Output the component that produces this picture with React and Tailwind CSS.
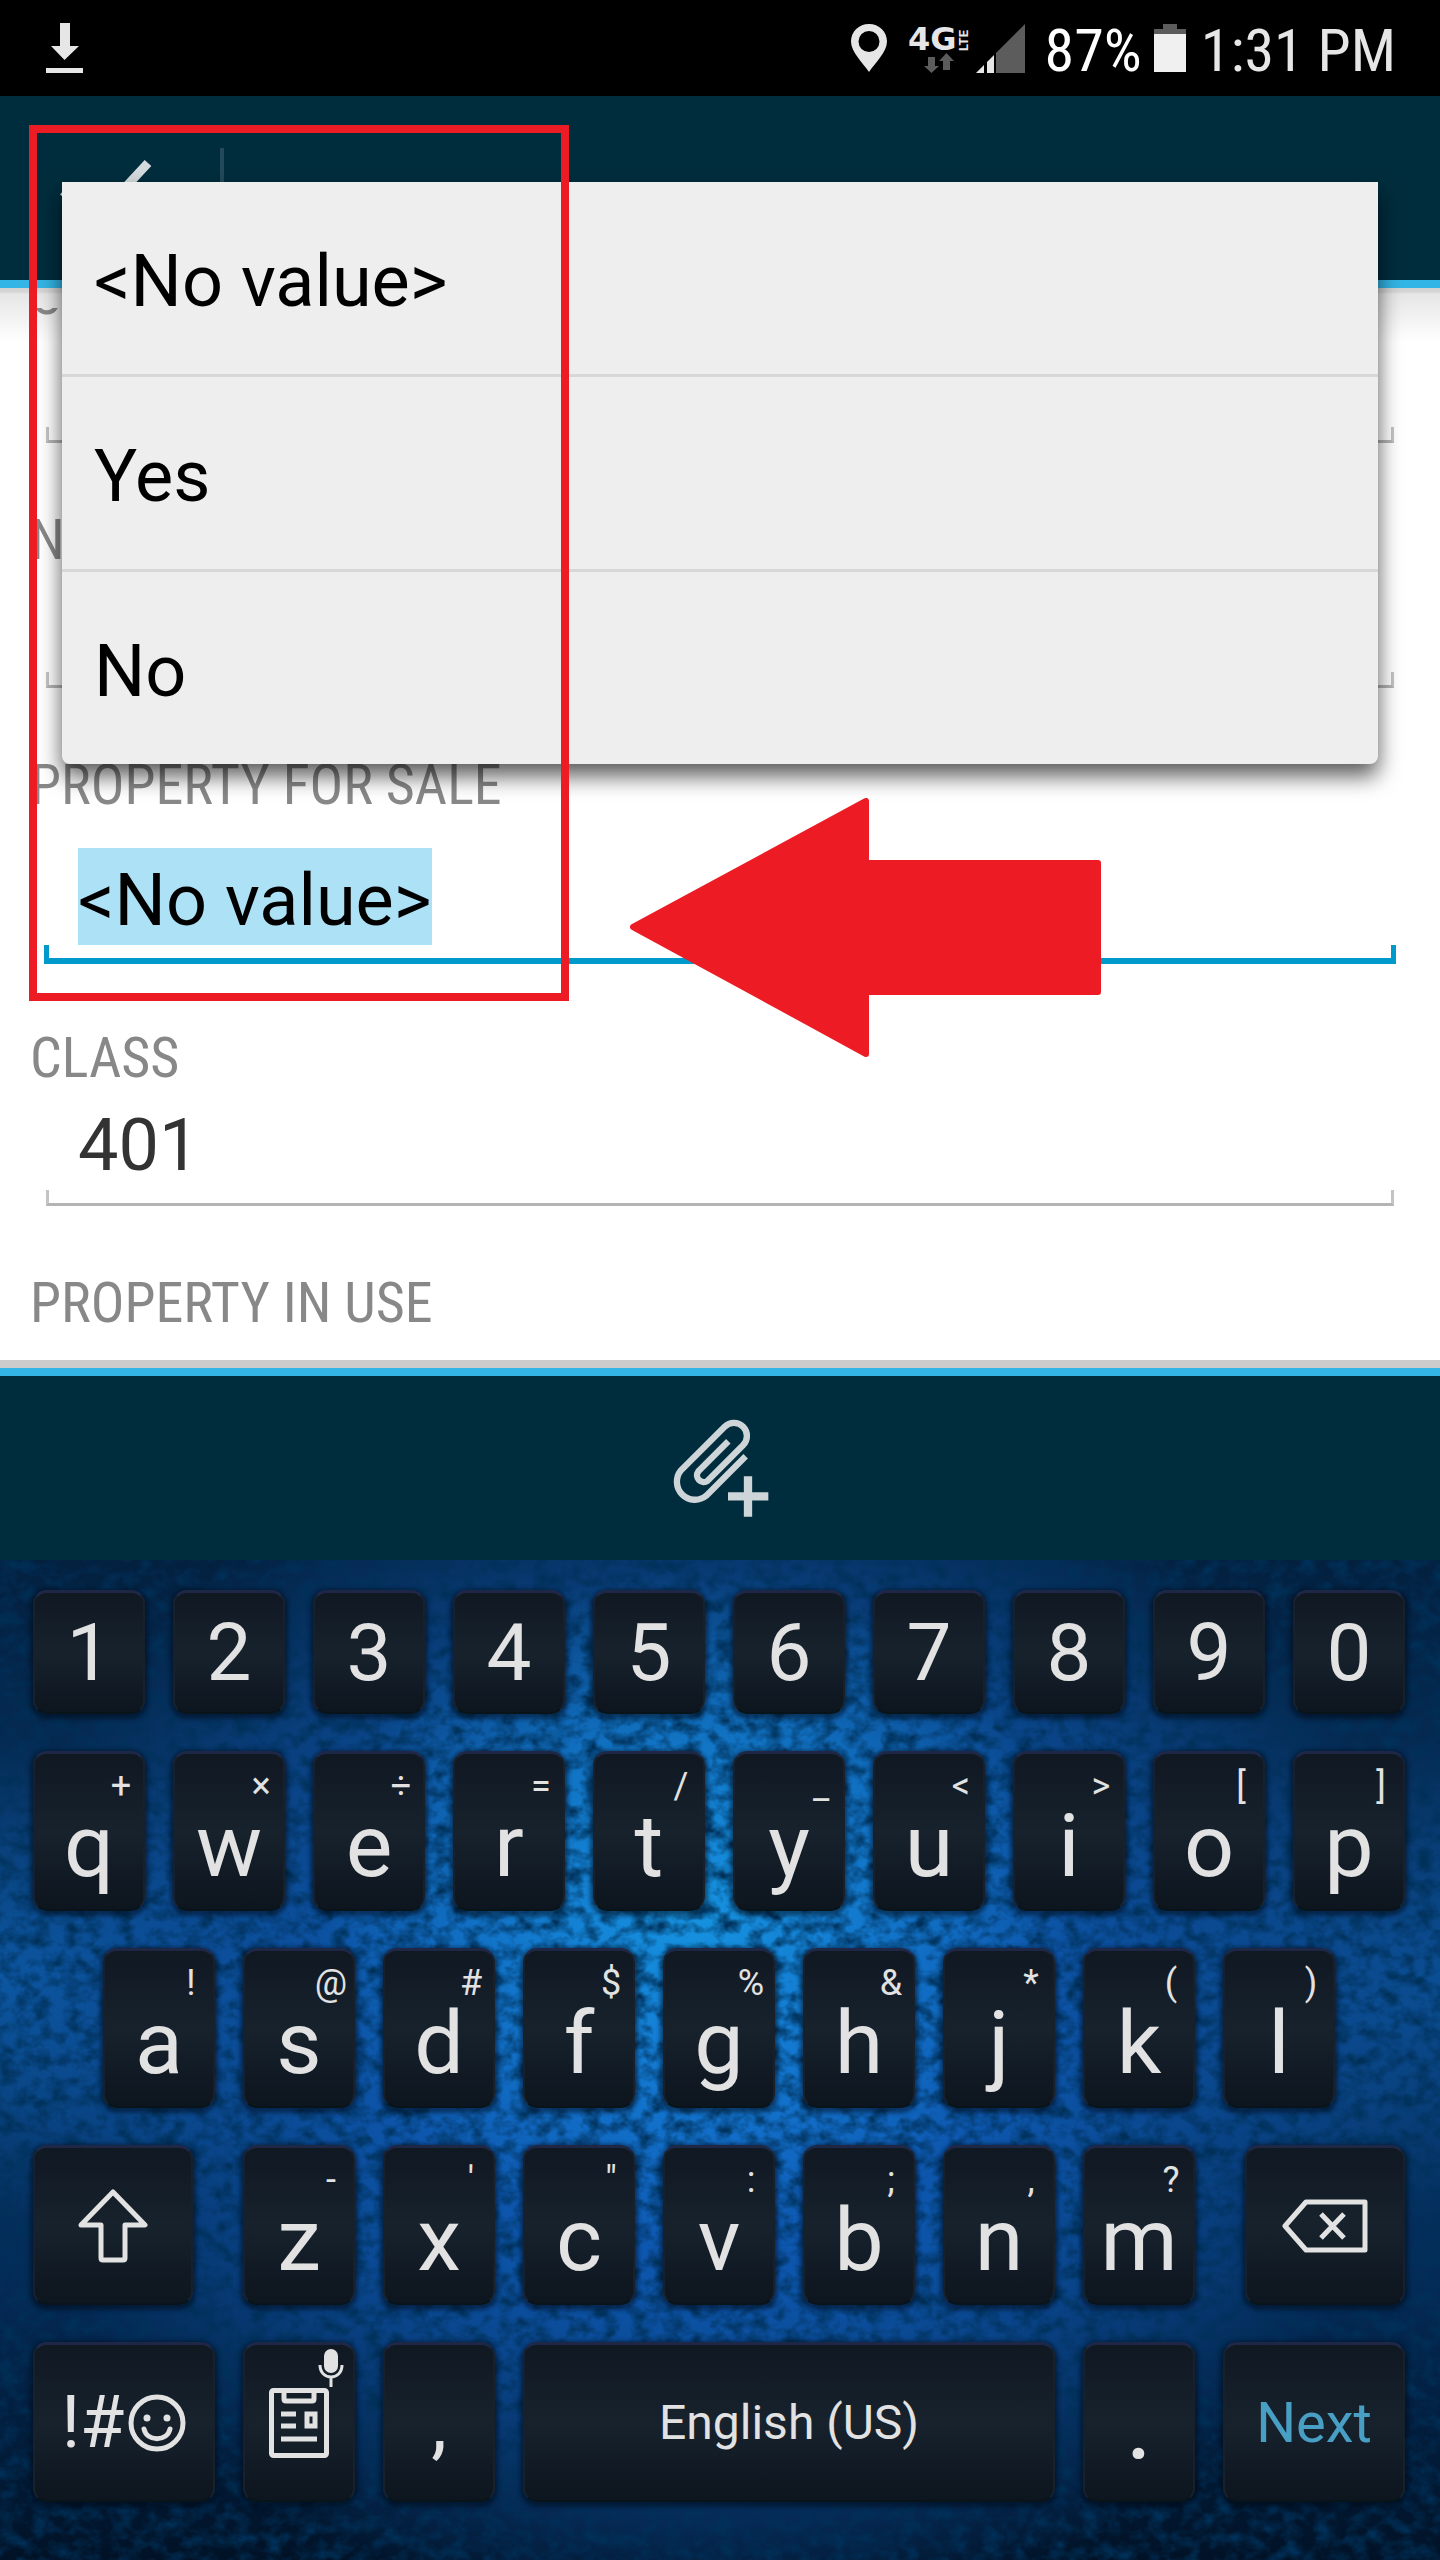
import React from "react";

const CONDENSED = "font-['Roboto_Condensed','Liberation_Sans_Narrow',Roboto,sans-serif]";

function StatusBar() {
  return (
    <header className="flex h-24 items-center justify-between bg-black pl-[46px] pr-[44px] text-[#e6e6e6]">
      <svg width="37" height="50" viewBox="0 0 37 50" fill="#e6e6e6" role="img" aria-label="Download">
        <path d="M14 0h10v23h9L18.500 37 5 23h9zM0 45h37v5H0z" />
      </svg>
      <div className="flex items-center">
        <svg width="40" height="48" viewBox="0 0 40 48" role="img" aria-label="Location">
          <path fillRule="evenodd" fill="#e6e6e6" d="M18 0C8 0 0 7.500 0 17.500 0 28 12 39 18 48c6-9 18-20 18-30.500C36 7.500 28 0 18 0zm0 7a10.500 10.500 0 1 1 0 21 10.500 10.500 0 0 1 0-21z" />
        </svg>
        <svg className="ml-[18px] overflow-visible" width="60" height="48" viewBox="0 0 60 48" role="img" aria-label="4G LTE">
          <text x="-1" y="26" fontSize="32" fontWeight="700" fontFamily="DejaVu Sans, sans-serif" fill="#e6e6e6">4G</text>
          <text transform="translate(59 27) rotate(-90)" fontSize="13" fontWeight="700" fontFamily="Roboto, sans-serif" fill="#e6e6e6">LTE</text>
          <path fill="#5c5c5c" d="M19 33h7v9h4l-7.500 7L15 42h4zM34 46v-9h-4l7.500-8 7.500 8h-4v9z" />
        </svg>
        <svg className="ml-[7px]" width="49" height="49" viewBox="0 0 49 49" role="img" aria-label="Signal">
          <path fill="#5c5c5c" d="M20 29 49 0v49H20z" />
          <path fill="#e6e6e6" d="M0 49 8 41v8zM11 38l7-7v18h-7z" />
        </svg>
        <span className={`ml-[20px] pt-1.5 text-[60px] leading-[72px] text-white ${CONDENSED}`}>87%</span>
        <svg className="ml-[12px]" width="32" height="48" viewBox="0 0 32 48" role="img" aria-label="Battery">
          <path fill="#5c5c5c" d="M9 0h14v5h9v6H0V5h9z" />
          <path fill="#f0f0f0" d="M0 10h32v38H0z" />
        </svg>
        <span className={`ml-[15px] pt-1.5 text-[60px] leading-[72px] ${CONDENSED}`}>1:31 PM</span>
      </div>
    </header>
  );
}

function ActionBar() {
  return (
    <nav className="flex h-48 items-center border-b-8 border-[#33b5e5] bg-[#002d3d]">
      <button type="button" aria-label="Done" className="flex h-20 w-[224px] items-center border-r-4 border-[#23495a] pl-[58px]">
        <svg width="96" height="76" viewBox="0 0 96 76" fill="none" stroke="#d3dbde" strokeWidth="9">
          <path d="M90 13 38 69 5 41" />
        </svg>
      </button>
    </nav>
  );
}

function Field({ id, label, value, active }) {
  return (
    <div className={active ? "mb-[62px]" : "mb-[65px]"}>
      <label htmlFor={id} className={`block pl-[30px] text-[56px] leading-[64px] text-[#888888] ${CONDENSED}`}>
        {label}
      </label>
      {active ? (
        <div className="mx-11 pt-[31px]">
          <input id={id} defaultValue={value} className="ml-[34px] block h-[97px] w-[354px] bg-[#ade1f6] pt-2 text-[72px] text-black outline-none" />
          <div className="h-[19px] border-x-[5px] border-b-[6px] border-[#0099cc]" />
        </div>
      ) : (
        <div className="mx-[46px]">
          <input id={id} defaultValue={value} className="block h-[100px] w-full bg-transparent pl-8 pt-3 text-[72px] text-[#333333] outline-none" />
          <div className="h-4 border-x-[3px] border-b-[3px] border-[#c4c4c4] border-b-[#b4b4b4]" />
        </div>
      )}
    </div>
  );
}

function Form() {
  return (
    <main className="border-b-8 border-[#cccccc] bg-[linear-gradient(to_bottom,#d2d2d2_0px,#d6d6d6_4px,#e6e6e6_6px,#ffffff_54px)] pt-5">
      <div className="overflow-hidden">
        <div className="-mt-[45px] pb-[25px]">
          <Field id="city" label="CITY" value="" />
          <Field id="name" label="NAME" value="" />
          <Field id="sale" label="PROPERTY FOR SALE" value="<No value>" active />
          <Field id="class" label="CLASS" value="401" />
          <h2 className={`pl-[30px] text-[56px] leading-[64px] text-[#888888] ${CONDENSED}`}>PROPERTY IN USE</h2>
        </div>
      </div>
    </main>
  );
}

function Dropdown() {
  const options = ["<No value>", "Yes", "No"];
  return (
    <ul
      role="listbox"
      aria-label="Property for sale"
      className="absolute left-[62px] right-[62px] top-[182px] divide-y-[3px] divide-[#d7d7d7] rounded-b-lg bg-[#eeeeee] shadow-[0_12px_22px_0_rgba(0,0,0,0.65)]"
    >
      {options.map((o) => (
        <li key={o} role="option" aria-selected={o === "<No value>"}>
          <button type="button" className="block h-48 w-full pl-8 pt-2 text-left text-[72px] text-black">
            {o}
          </button>
        </li>
      ))}
    </ul>
  );
}

function Annotations() {
  return (
    <>
      <div className="pointer-events-none absolute left-[29px] top-[125px] h-[876px] w-[540px] border-8 border-[#ed1c24]" />
      <svg className="pointer-events-none absolute left-[630px] top-[798px]" width="472" height="260" viewBox="0 0 472 260" aria-hidden="true">
        <path d="M3 129 236 3v62h232v129H236v62z" fill="#ed1c24" stroke="#ed1c24" strokeWidth="6" strokeLinejoin="round" />
      </svg>
    </>
  );
}

function AttachBar() {
  return (
    <div className="flex h-48 items-center justify-center border-t-8 border-[#33b5e5] bg-[#002d3d]">
      <button type="button" aria-label="Add attachment">
        <svg width="100" height="104" viewBox="330 215 300 312" fill="none">
          <path d="M557 336 439 454A54 54 0 0 1 363 378L494 247A39 39 0 0 1 549 303L443 409A20 20 0 0 1 415 381L505 291" stroke="#cdd5d8" strokeWidth="19" />
          <path d="M564 396v121M504 456h121" stroke="#cdd5d8" strokeWidth="25" />
        </svg>
      </button>
    </div>
  );
}

function Key({ children, hint, label, className = "" }) {
  return (
    <button
      type="button"
      aria-label={label}
      className={`relative flex items-center justify-center rounded-[14px] border-2 border-t-[3px] border-[#18202b] border-t-[#1e2745] border-b-[#08141a] bg-linear-to-b from-[#101822] via-[#17222d] to-[#0d151e] text-[#e2e2e2] shadow-[0_2px_4px_3px_rgba(0,8,20,0.5)] ${className}`}
    >
      {hint && <span className="absolute right-[-2px] top-2 w-12 text-center text-[36px] leading-[48px]">{hint}</span>}
      {children}
    </button>
  );
}

const ROW1 = "1234567890".split("");
const ROW2 = [["q", "+"], ["w", "×"], ["e", "÷"], ["r", "="], ["t", "/"], ["y", "_"], ["u", "<"], ["i", ">"], ["o", "["], ["p", "]"]];
const ROW3 = [["a", "!"], ["s", "@"], ["d", "#"], ["f", "$"], ["g", "%"], ["h", "&"], ["j", "*"], ["k", "("], ["l", ")"]];
const ROW4 = [["z", "-"], ["x", "'"], ["c", "\""], ["v", ":"], ["b", ";"], ["n", ","], ["m", "?"]];

function Letter({ k, className = "" }) {
  return (
    <Key hint={k[1]} className={`col-span-2 h-40 ${className}`}>
      <span className="pt-7 text-[88px] leading-[104px]">{k[0]}</span>
    </Key>
  );
}

function Texture() {
  return (
    <svg className="absolute inset-0 h-full w-full" aria-hidden="true">
      <filter id="leather" x="0" y="0" width="100%" height="100%">
        <feTurbulence type="fractalNoise" baseFrequency="0.06 0.075" numOctaves="3" seed="8" result="n" />
        <feColorMatrix in="n" type="matrix" values="0 0 0 0 0  0 0 0 0 0.030  0 0 0 0 0.100  1.9 0.9 0 0 -1.150" />
      </filter>
      <rect width="100%" height="100%" filter="url(#leather)" />
    </svg>
  );
}

function Keyboard() {
  return (
    <section
      aria-label="Keyboard"
      className="relative bg-[#04204a] bg-[radial-gradient(ellipse_26%_34%_at_48%_35%,rgba(22,150,226,0.95)_0%,rgba(20,120,210,0)_100%),radial-gradient(ellipse_50%_62%_at_49%_46%,#1260c8_0%,rgba(14,92,184,0.85)_45%,rgba(6,50,110,0)_100%),radial-gradient(ellipse_24%_24%_at_100%_42%,#0b4e94_0%,rgba(10,70,134,0)_100%),radial-gradient(ellipse_24%_24%_at_0%_42%,#0c56a0_0%,rgba(10,74,144,0)_100%),linear-gradient(to_bottom,#03203f_0%,#073568_40%,#042c5a_70%,#011226_100%)]"
    >
      <Texture />
      <div className="relative grid grid-cols-20 gap-x-7 gap-y-[37px] pb-[58px] pl-[33px] pr-[35px] pt-[30px]">
        {ROW1.map((d) => (
          <Key key={d} className="col-span-2 h-[124px] text-[80px]">{d}</Key>
        ))}
        {ROW2.map((k) => (
          <Letter key={k[0]} k={k} />
        ))}
        {ROW3.map((k, i) => (
          <Letter key={k[0]} k={k} className={i === 0 ? "col-start-2" : ""} />
        ))}
        <Key label="Shift" className="col-span-3 col-start-1 h-40 w-40">
          <svg width="70" height="74" viewBox="0 0 70 74" fill="none" stroke="#e2e2e2" strokeWidth="5" strokeLinejoin="round">
            <path d="M35 3 67 36H47V69q0 2-2 2H25q-2 0-2-2V36H3z" />
          </svg>
        </Key>
        {ROW4.map((k) => (
          <Letter key={k[0]} k={k} />
        ))}
        <Key label="Backspace" className="col-span-3 h-40 w-40 justify-self-end">
          <svg width="86" height="54" viewBox="0 0 86 54" fill="none" stroke="#e2e2e2" strokeWidth="5" strokeLinejoin="round">
            <path d="M3 27 24 3h59v48H24zM39 15l23 24M62 15 39 39" />
          </svg>
        </Key>
        <Key label="Symbols and emoji" className="col-span-3 h-40 text-[72px]">
          <span>!#</span>
          <svg className="ml-1" width="58" height="58" viewBox="0 0 58 58" fill="none" stroke="#e2e2e2" strokeWidth="5" strokeLinecap="round">
            <circle cx="29" cy="29" r="26" />
            <path d="M16 35c3 13 23 13 26 0" />
            <circle cx="19" cy="24" r="3.500" fill="#e2e2e2" stroke="none" />
            <circle cx="39" cy="24" r="3.500" fill="#e2e2e2" stroke="none" />
          </svg>
        </Key>
        <Key
          label="Clipboard"
          className="col-span-2 h-40"
          hint={
            <svg className="mx-auto -mt-1" width="26" height="38" viewBox="0 0 26 38" fill="none" stroke="#e2e2e2" strokeWidth="3">
              <rect x="6" y="0" width="14" height="24" rx="7" fill="#e2e2e2" stroke="none" />
              <path d="M2 16c0 16 22 16 22 0M13 28v10" />
            </svg>
          }
        >
          <svg width="60" height="70" viewBox="0 0 60 70" fill="none" stroke="#e2e2e2" strokeWidth="5">
            <rect x="2.500" y="2.500" width="55" height="65" rx="2" />
            <path d="M15 3v8q0 2 2 2h26q2 0 2-2V3M12 26h15M12 38h15M12 51h36M38 26h8v12h-8z" />
          </svg>
        </Key>
        <Key className="col-span-2 h-40 text-[80px]">,</Key>
        <Key className="col-span-8 h-40 text-[48px]">English (US)</Key>
        <Key className="col-span-2 h-40 text-[104px]">.</Key>
        <Key className="col-span-3 h-40 text-[56px]">
          <span className="text-[#489fc3]">Next</span>
        </Key>
      </div>
    </section>
  );
}

export default function App() {
  return (
    <div className="relative bg-white font-[Roboto,sans-serif]">
      <StatusBar />
      <ActionBar />
      <Form />
      <AttachBar />
      <Keyboard />
      <Dropdown />
      <Annotations />
    </div>
  );
}
